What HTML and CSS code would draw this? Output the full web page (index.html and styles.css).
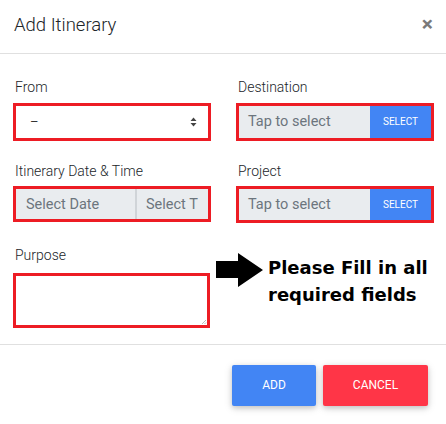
FILE: index.html
```html
<!DOCTYPE html>
<html>
<head>
<meta charset="utf-8">
<link rel="stylesheet" href="styles.css">
</head>
<body>
<div class="modal">
  <div class="modal-header">
    <h4 class="modal-title">Add Itinerary</h4>
    <span class="close">&times;</span>
  </div>
  <div class="modal-body">
    <div class="field">
      <label class="lbl">From</label>
      <div class="box box-select">
        <span class="dash">–</span>
        <svg class="caret" width="7" height="10" viewBox="0 0 7 10"><path d="M3.5 0.5 L6.5 4 L0.5 4 Z M0.5 6 L6.5 6 L3.5 9.5 Z" fill="#444"/></svg>
      </div>
    </div>
    <div class="field">
      <label class="lbl">Destination</label>
      <div class="box box-pick">
        <span class="pick-input">Tap to select</span>
        <span class="pick-btn">SELECT</span>
      </div>
    </div>
    <div class="field">
      <label class="lbl">Itinerary Date &amp; Time</label>
      <div class="box box-date">
        <span class="date-part date-a">Select Date</span>
        <span class="date-part date-b">Select T</span>
      </div>
    </div>
    <div class="field">
      <label class="lbl">Project</label>
      <div class="box box-pick box-pick2">
        <span class="pick-input">Tap to select</span>
        <span class="pick-btn">SELECT</span>
      </div>
    </div>
    <div class="field field-last">
      <label class="lbl">Purpose</label>
      <div class="box box-text">
        <svg class="grip" width="6" height="6" viewBox="0 0 6 6"><path d="M5 1 L1 5 M5 3.5 L3.5 5" stroke="#bbb" stroke-width="1"/></svg>
      </div>
    </div>
    <div class="note">
      <svg class="arrow" width="48" height="35" viewBox="0 0 48 35"><path d="M0 8 L22 8 L22 0 L47 17 L22 34 L22 25 L0 25 Z" fill="#000"/></svg>
      <p class="note-text">Please Fill in all required fields</p>
    </div>
  </div>
  <div class="modal-footer">
    <button class="btn btn-add">ADD</button>
    <button class="btn btn-cancel">CANCEL</button>
  </div>
</div>
</body>
</html>
```

FILE: styles.css
```css
* { box-sizing: border-box; }
html, body { margin: 0; padding: 0; background: #fff; }
body { font-family: Roboto, "Noto Sans", sans-serif; color: #212529; }

.modal { width: 446px; height: 424px; position: relative; background: #fff; }

.modal-header {
  height: 54px;
  border-bottom: 1px solid #e0e0e0;
  display: flex;
  align-items: center;
  justify-content: space-between;
  padding: 0 13px 0 14px;
}
.modal-title { margin: 0; font-size: 18.5px; font-weight: 300; color: #212529; line-height: 1; padding-bottom: 3px; }
.close { font-size: 21px; font-weight: 700; color: #7a7a7a; line-height: 1; padding-bottom: 5px; }

.modal-body {
  position: relative;
  display: grid;
  grid-template-columns: 198px 198px;
  column-gap: 25px;
  row-gap: 21px;
  padding: 24px 12px 16px 13px;
  border-bottom: 1px solid #e0e0e0;
}
.field { display: flex; flex-direction: column; }
.field-last { margin-top: 2px; }
.field-last .lbl { margin-bottom: 7px; }
.lbl { font-size: 14px; font-weight: 300; line-height: 19.5px; color: #212529; margin: 0 0 5px 2px; }

.box { border: 3px solid #ed1c24; display: flex; align-items: stretch; }

.box-select { height: 38px; background: #fff; align-items: center; justify-content: space-between; padding: 0 11px 0 14px; }
.dash { font-size: 13px; color: #333; }

.box-pick { height: 38px; }
.box-pick2 { height: 37px; }
.pick-input { flex: 1; background: #e9ecef; color: #6c757d; font-size: 14.5px; display: flex; align-items: center; padding-left: 9px; }
.pick-btn { width: 61px; background: #4285f4; color: #fff; font-size: 10px; display: flex; align-items: center; justify-content: center; }

.box-date { height: 36px; }
.date-part { background: #e9ecef; color: #6c757d; font-size: 14.5px; display: flex; align-items: center; white-space: nowrap; }
.date-a { width: 121px; padding-left: 10px; border-right: 2px solid #d0d4d8; }
.date-b { flex: 1; padding-left: 9px; }

.box-text { height: 55px; width: 197px; position: relative; background: #fff; }
.grip { position: absolute; right: 0; bottom: 0; }

.note { position: absolute; left: 216px; top: 199px; display: flex; align-items: flex-start; }
.note-text {
  margin: 1px 0 0 4px;
  width: 175px;
  font-family: "DejaVu Sans", Verdana, sans-serif;
  font-weight: 700;
  font-size: 18px;
  line-height: 27px;
  color: #000;
}

.modal-footer { display: flex; justify-content: flex-end; gap: 7px; padding: 20px 18px 0 0; }
.btn {
  border: 0; border-radius: 2px; height: 41px; color: #fff; font-family: Roboto, sans-serif; font-size: 12px;
  box-shadow: 0 2px 5px 0 rgba(0,0,0,0.16), 0 2px 10px 0 rgba(0,0,0,0.12);
}
.btn-add { width: 84px; background: #4285f4; }
.btn-cancel { width: 105px; background: #ff3547; }
```
